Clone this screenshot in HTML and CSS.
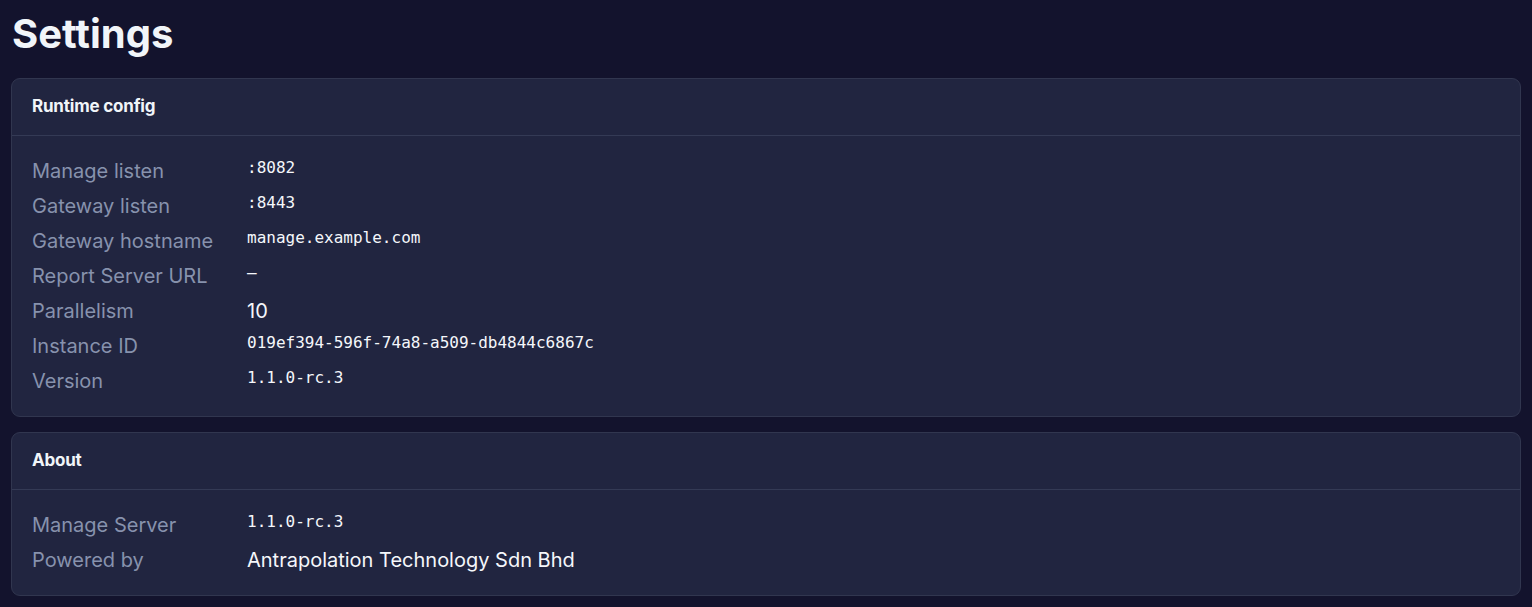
FILE: index.html
```html
<!DOCTYPE html>
<html>
<head>
<meta charset="utf-8">
<link rel="stylesheet" href="styles.css">
</head>
<body>
<main class="page">
  <h1 class="title">Settings</h1>
  <section class="card">
    <div class="card-head">Runtime config</div>
    <dl class="card-body">
      <div class="row"><dt>Manage listen</dt><dd class="mono">:8082</dd></div>
      <div class="row"><dt>Gateway listen</dt><dd class="mono">:8443</dd></div>
      <div class="row"><dt>Gateway hostname</dt><dd class="mono">manage.example.com</dd></div>
      <div class="row"><dt>Report Server URL</dt><dd class="mono">—</dd></div>
      <div class="row"><dt>Parallelism</dt><dd>10</dd></div>
      <div class="row"><dt>Instance ID</dt><dd class="mono">019ef394-596f-74a8-a509-db4844c6867c</dd></div>
      <div class="row"><dt>Version</dt><dd class="mono">1.1.0-rc.3</dd></div>
    </dl>
  </section>
  <section class="card">
    <div class="card-head">About</div>
    <dl class="card-body">
      <div class="row"><dt>Manage Server</dt><dd class="mono">1.1.0-rc.3</dd></div>
      <div class="row"><dt>Powered by</dt><dd>Antrapolation Technology Sdn Bhd</dd></div>
    </dl>
  </section>
</main>
</body>
</html>
```
FILE: styles.css
```css
html, body {
  margin: 0;
  padding: 0;
  background: #13132d;
}
body {
  font-family: Inter, "Noto Sans", sans-serif;
  color: #f1f5f9;
}
.page {
  padding: 8px 11px 12px 11px;
  display: flex;
  flex-direction: column;
  gap: 15px;
}
.title {
  margin: 0 0 3px 0;
  font-size: 40px;
  font-weight: 700;
  line-height: 52px;
  padding-left: 1px;
}
.card {
  background: #212540;
  border: 1px solid #31364f;
  border-radius: 9px;
}
.card-head {
  height: 57px;
  box-sizing: border-box;
  padding: 0 20px 2px 20px;
  display: flex;
  align-items: center;
  font-size: 17px;
  font-weight: 700;
  letter-spacing: -0.2px;
  border-bottom: 1px solid #343a55;
}
.card-body {
  margin: 0;
  padding: 17px 20px 18px 20px;
}
.row {
  display: flex;
  align-items: center;
  height: 35px;
}
.row dt {
  width: 215px;
  flex: none;
  color: #8792ad;
  font-size: 20px;
}
.row dd {
  margin: 0;
  font-size: 20px;
  color: #f5f7fb;
}
.row dd.mono {
  font-family: "DejaVu Sans Mono", "Liberation Mono", monospace;
  font-size: 16px;
  position: relative;
  top: -3px;
}
```
